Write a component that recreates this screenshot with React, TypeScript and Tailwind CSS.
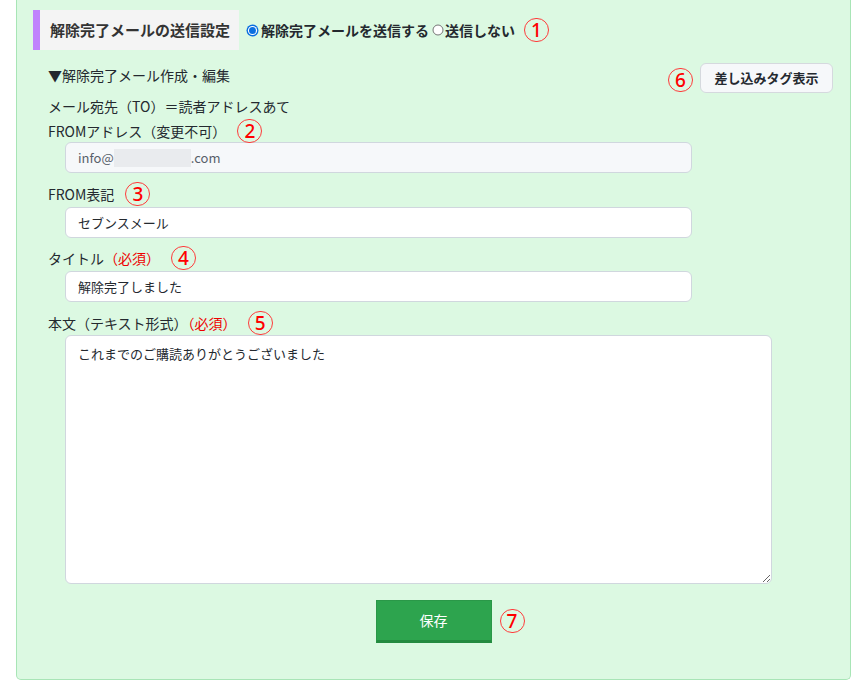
import React from "react";

const font = { fontFamily: '"Noto Sans CJK JP", "Noto Sans", sans-serif' };

function Mark({ n, className = "" }: { n: string; className?: string }) {
  return (
    <span
      className={`inline-flex items-center justify-center w-[25px] h-[24px] rounded-full border border-[#ff3b3b] text-[#ff0000] text-[19px] leading-none font-medium shrink-0 ${className}`}
      style={{ fontFamily: '"Noto Sans", sans-serif' }}
    >
      {n}
    </span>
  );
}

function Radio({ checked }: { checked: boolean }) {
  return checked ? (
    <svg width="13" height="13" viewBox="0 0 13 13" className="shrink-0">
      <circle cx="6.5" cy="6.5" r="6" fill="#0b6fe0" />
      <circle cx="6.5" cy="6.5" r="4.6" fill="#fff" />
      <circle cx="6.5" cy="6.5" r="3.5" fill="#0b6fe0" />
    </svg>
  ) : (
    <svg width="12" height="12" viewBox="0 0 12 12" className="shrink-0">
      <circle cx="6" cy="6" r="5" fill="#fff" stroke="#767676" strokeWidth="1" />
    </svg>
  );
}

function Label({ children, mark, className = "" }: { children: React.ReactNode; mark: string; className?: string }) {
  return (
    <div className={`flex items-center h-[22px] text-[14px] text-[#24292f] ${className}`}>
      <span>{children}</span>
      <Mark n={mark} className="ml-[11px]" />
    </div>
  );
}

const inputCls =
  "ml-[17px] w-[627px] h-[31px] flex items-center px-[12px] rounded-[6px] border border-[#d0d7de] text-[13px]";

export default function App() {
  return (
    <div className="bg-white min-h-[689px]" style={font}>
      <div className="ml-[16px] w-[835px] bg-[#dcf9e2] border-x border-b border-[#a8e5b6] rounded-b-[5px] pt-[10px] px-[16px] pb-[36px]">
        {/* 送信設定 */}
        <div className="flex items-center h-[40px]">
          <div className="h-full flex items-center bg-[#f4f4f4] border-l-[7px] border-[#c084fc] pl-[10px] pr-[9px] text-[15px] font-bold text-[#333]">
            解除完了メールの送信設定
          </div>
          <label className="ml-[7px] flex items-center gap-[2px] text-[14px] font-bold text-[#24292f]">
            <Radio checked />
            <span>解除完了メールを送信する</span>
          </label>
          <label className="ml-[3px] flex items-center gap-[1px] text-[14px] font-bold text-[#24292f]">
            <Radio checked={false} />
            <span>送信しない</span>
          </label>
          <Mark n="1" className="ml-[9px]" />
        </div>

        <div className="pl-[15px]">
          <div className="mt-[13px] flex items-start justify-between">
            <div className="text-[14px] leading-[24px] text-[#24292f]">▼解除完了メール作成・編集</div>
            <div className="flex items-center gap-[7px] mr-[1px]">
              <Mark n="6" className="mt-[4px]" />
              <button className="h-[30px] w-[133px] rounded-[6px] bg-[#f6f8fa] border border-[#d5d9de] text-[13px] font-bold text-[#24292f]">
                差し込みタグ表示
              </button>
            </div>
          </div>

          <div className="mt-[2px] h-[22px] flex items-center text-[14px] text-[#24292f]">
            メール宛先（TO）＝読者アドレスあて
          </div>

          <Label mark="2" className="mt-[3px]">FROMアドレス（変更不可）</Label>
          <div className={`${inputCls} bg-[#f6f8fa] text-[#57606a]`}>
            <span>info@</span>
            <span className="inline-block w-[77px] h-[18px] bg-[#e9ebee]" />
            <span>.com</span>
          </div>

          <Label mark="3" className="mt-[10px]">FROM表記</Label>
          <div className={`${inputCls} mt-[2px] bg-white text-[#24292f]`}>セブンスメール</div>

          <Label mark="4" className="mt-[9px]">
            タイトル<span className="text-[#e00]">（必須）</span>
          </Label>
          <div className={`${inputCls} mt-[2px] bg-white text-[#24292f]`}>解除完了しました</div>

          <Label mark="5" className="mt-[10px]">
            本文（テキスト形式）<span className="text-[#e00]">（必須）</span>
          </Label>
          <textarea
            readOnly
            value="これまでのご購読ありがとうございました"
            className="block ml-[17px] mt-[1px] w-[707px] h-[249px] px-[12px] py-[8px] rounded-[6px] border border-[#d0d7de] bg-white text-[13px] text-[#24292f] outline-none"
            style={font}
          />
        </div>

        <div className="mt-[16px] flex justify-center">
          <div className="relative">
            <button className="w-[116px] h-[43px] bg-[#2da44e] border border-[#2a9848] border-b-[3px] border-b-[#248a40] text-white text-[14px]">
              保存
            </button>
            <Mark n="7" className="absolute left-[124px] top-[9px]" />
          </div>
        </div>
      </div>
    </div>
  );
}
